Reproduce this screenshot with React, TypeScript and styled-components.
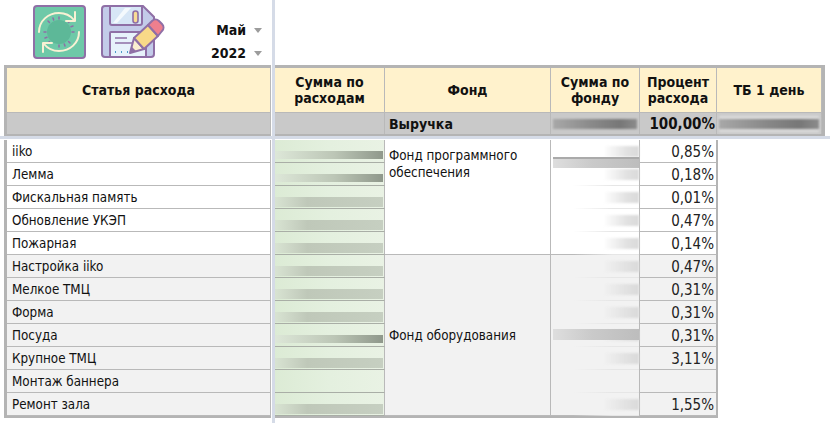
import styled, { createGlobalStyle } from "styled-components";

const GRID = "#b4b4b4";
const LINE = "#b9b9b9";
const SPLIT = "#d5dbe7";

const expenses = [
  { name: "iiko", percent: "0,85%", bar: "dark" },
  { name: "Лемма", percent: "0,18%", bar: "dark" },
  { name: "Фискальная память", percent: "0,01%", bar: "soft" },
  { name: "Обновление УКЭП", percent: "0,47%", bar: "soft" },
  { name: "Пожарная", percent: "0,14%", bar: "soft" },
  { name: "Настройка iiko", percent: "0,47%", bar: "soft" },
  { name: "Мелкое ТМЦ", percent: "0,31%", bar: "soft" },
  { name: "Форма", percent: "0,31%", bar: "soft" },
  { name: "Посуда", percent: "0,31%", bar: "dark" },
  { name: "Крупное ТМЦ", percent: "3,11%", bar: "soft" },
  { name: "Монтаж баннера", percent: "", bar: "none" },
  { name: "Ремонт зала", percent: "1,55%", bar: "soft" },
];

const groups = [
  { title: "Фонд программного обеспечения", from: 0, to: 5, wide: 0, shaded: false, middle: false },
  { title: "Фонд оборудования", from: 5, to: 12, wide: 3, shaded: true, middle: true },
];

const App = () => {
  return (
    <>
      <GlobalStyle />
      <Page>
        <LeftPane>
          <Toolbar>
            <IconButton>
              <RefreshIcon />
            </IconButton>
            <IconButton>
              <SaveIcon />
            </IconButton>
            <Filters>
              <Filter>
                Май <Caret />
              </Filter>
              <Filter>
                2022 <Caret />
              </Filter>
            </Filters>
          </Toolbar>
          <LeftHead>
            <HeadCell>Статья расхода</HeadCell>
            <LeftTotal />
          </LeftHead>
          <HSplit />
          <LeftBody>
            {expenses.map((item, i) => (
              <NameCell key={item.name} $shaded={i >= 5}>
                {item.name}
              </NameCell>
            ))}
          </LeftBody>
        </LeftPane>
        <VSplit />
        <RightPane>
          <EmptyBar />
          <RightHead>
            <HeadCell>
              Сумма по
              <br />
              расходам
            </HeadCell>
            <HeadCell>Фонд</HeadCell>
            <HeadCell>
              Сумма по
              <br />
              фонду
            </HeadCell>
            <HeadCell>
              Процент
              <br />
              расхода
            </HeadCell>
            <HeadCell>ТБ 1 день</HeadCell>
            <TotalCell />
            <TotalCell>Выручка</TotalCell>
            <TotalCell>
              <TotalBar />
            </TotalCell>
            <TotalPercent>100,00%</TotalPercent>
            <TotalCell>
              <TotalBar $halo />
            </TotalCell>
          </RightHead>
          <HSplit />
          <RightBody>
            {groups.map((group) => {
              const rows = expenses.slice(group.from, group.to);
              return (
                <FundGroup key={group.title} $rows={rows.length} $shaded={group.shaded}>
                  {rows.map((row) => (
                    <SumCell key={row.name}>
                      {row.bar !== "none" && <SumBar $dark={row.bar === "dark"} />}
                    </SumCell>
                  ))}
                  <FundName $middle={group.middle}>{group.title}</FundName>
                  <FundSum>
                    {rows.map((row, i) => (
                      <FundSlot key={row.name}>
                        {row.percent && <FundBar />}
                        {i === group.wide && <WideBar $low={!group.middle} />}
                      </FundSlot>
                    ))}
                  </FundSum>
                  {rows.map((row) => (
                    <PercentCell key={row.name}>{row.percent}</PercentCell>
                  ))}
                </FundGroup>
              );
            })}
          </RightBody>
        </RightPane>
      </Page>
    </>
  );
};

const RefreshIcon = () => (
  <svg width="53" height="54" viewBox="0 0 53 54">
    <rect x="1" y="1" width="51" height="52" rx="3" fill="#6ec9a8" stroke="#8f6fa6" strokeWidth="2" />
    <circle cx="26" cy="27" r="12" fill="#5db898" />
    <g stroke="#8f6fa6" strokeWidth="1.5" strokeLinecap="round">
      <path d="M26 12v2M26 40v2M11 27h2M39 27h2M15 16l1.5 1.5M35.5 36.5 37 38M37 16l-1.5 1.5M16.5 36.5 15 38M20 13l.7 2M32 41l-.7-2M12 33l2-.7M40 21l-2 .7" />
    </g>
    <g fill="none" stroke="#f9f1d4" strokeWidth="2" strokeLinecap="round" strokeLinejoin="round">
      <path d="M6 27C6 16 15 8 26 8c6 0 11 2 15 7" />
      <path d="M42 7v9h-9" />
      <path d="M46 27c0 11-9 19-20 19-6 0-11-2-15-7" />
      <path d="M10 47v-9h9" />
    </g>
  </svg>
);

const SaveIcon = () => (
  <svg width="66" height="54" viewBox="0 0 66 54">
    <path d="M4 1h38l11 11v37a3 3 0 0 1-3 3H4a3 3 0 0 1-3-3V4a3 3 0 0 1 3-3z" fill="#c3cbe9" stroke="#8f6fa6" strokeWidth="2" />
    <path d="M9 1h32v17a2 2 0 0 1-2 2H11a2 2 0 0 1-2-2z" fill="#d7e6f6" stroke="#8f6fa6" strokeWidth="2" />
    <path d="M12 18 24 3h6L16 18z" fill="#f4f9fd" />
    <rect x="32" y="6" width="5" height="12" rx="2.5" fill="#f8dc95" stroke="#8f6fa6" strokeWidth="1.6" />
    <rect x="9" y="27" width="36" height="25" rx="1" fill="#e7f2fb" stroke="#8f6fa6" strokeWidth="2" />
    <path d="M14 33h12M14 38h18" stroke="#8f6fa6" strokeWidth="1.6" />
    <path d="M14 47h1M20 47h1M26 47h1" stroke="#4b9ac9" strokeWidth="2" />
    <path d="M29 48 33 33 43 44z" fill="#fbeed0" stroke="#8f6fa6" strokeWidth="2" strokeLinejoin="round" />
    <path d="M29 48l2-6 4 4z" fill="#8f6fa6" />
    <path d="M33 33 47 20l10 11-14 13z" fill="#f8d988" stroke="#8f6fa6" strokeWidth="2" strokeLinejoin="round" />
    <path d="M47 20l4-4c2-2 5-2 7 0l3 3c2 2 2 5 0 7l-4 5z" fill="#ee7f8e" stroke="#8f6fa6" strokeWidth="2" strokeLinejoin="round" />
  </svg>
);

const GlobalStyle = createGlobalStyle`
  html, body {
    margin: 0;
    padding: 0;
    background: #fff;
    overflow: hidden;
  }
  * {
    box-sizing: border-box;
  }
`;

const Page = styled.div`
  display: flex;
  width: 830px;
  height: 423px;
  overflow: hidden;
  color: #111;
  font-family: "DejaVu Sans Condensed", "DejaVu Sans", sans-serif;
  font-size: 13.3px;
`;

const LeftPane = styled.div`
  display: flex;
  flex-direction: column;
  width: 272px;
  flex: none;
`;

const RightPane = styled.div`
  display: flex;
  flex-direction: column;
  flex: 1;
`;

const VSplit = styled.div`
  width: 3px;
  flex: none;
  background: ${SPLIT};
`;

const HSplit = styled.div`
  height: 4px;
  flex: none;
  background: ${SPLIT};
  border-bottom: 1px solid #fff;
`;

const Toolbar = styled.div`
  display: flex;
  align-items: flex-start;
  gap: 16px;
  height: 65px;
  padding: 5px 9px 0 33px;
`;

const EmptyBar = styled.div`
  height: 65px;
`;

const IconButton = styled.div`
  display: flex;
  line-height: 0;
  margin-right: -1px;
`;

const Filters = styled.div`
  display: flex;
  flex-direction: column;
  align-items: flex-end;
  gap: 7px;
  margin-left: auto;
  margin-top: 17px;
  margin-right: 1px;
`;

const Filter = styled.div`
  display: flex;
  align-items: center;
  gap: 8px;
  height: 16px;
  font-weight: 700;
  font-size: 14px;
`;

const Caret = styled.span`
  width: 0;
  height: 0;
  border-left: 4px solid transparent;
  border-right: 4px solid transparent;
  border-top: 5px solid #9c9c9c;
`;

const HeadCell = styled.div`
  display: flex;
  align-items: center;
  justify-content: center;
  height: 45px;
  background: #fff2cc;
  border-right: 1px solid ${LINE};
  border-bottom: 1px solid ${LINE};
  font-weight: 700;
  font-size: 14px;
  line-height: 16px;
  text-align: center;
`;

const LeftHead = styled.div`
  width: 267px;
  margin-left: 4px;
  border-left: 3px solid ${GRID};
  border-top: 3px solid ${GRID};
  border-bottom: 2px solid ${GRID};
  flex: none;
`;

const LeftTotal = styled.div`
  height: 21px;
  background: #c9c9c9;
  border-right: 1px solid ${LINE};
`;

const RightHead = styled.div`
  display: grid;
  grid-template-columns: 110px 166px 89px 77px 105px;
  grid-template-rows: 45px 21px;
  width: 550px;
  border-top: 3px solid ${GRID};
  border-right: 3px solid ${GRID};
  border-bottom: 2px solid ${GRID};
  flex: none;
`;

const TotalCell = styled.div`
  display: flex;
  align-items: center;
  padding-left: 4px;
  background: #c9c9c9;
  border-right: 1px solid ${LINE};
  font-weight: 700;
  font-size: 14px;
`;

const TotalPercent = styled(TotalCell)`
  justify-content: flex-end;
  padding: 0 1px 0 0;
  font-size: 15px;
`;

const TotalBar = styled.div<{ $halo?: boolean }>`
  width: 100%;
  height: 10px;
  margin-left: -2px;
  background: linear-gradient(90deg, #a8a8a8, #8a8a8a 45%, #777 80%, #8c8c8c);
  box-shadow: ${({ $halo }) => ($halo ? "0 -3px 2px #dcdcdc, 0 3px 2px #dcdcdc" : "none")};
  filter: blur(0.8px);
`;

const LeftBody = styled.div`
  width: 267px;
  margin-left: 4px;
  border-left: 3px solid ${GRID};
  border-bottom: 2px solid ${GRID};
`;

const NameCell = styled.div<{ $shaded: boolean }>`
  display: flex;
  align-items: center;
  height: 23px;
  padding: 1px 0 0 5px;
  background: ${({ $shaded }) => ($shaded ? "#f2f2f2" : "#fff")};
  border-right: 1px solid ${LINE};
  border-bottom: 1px solid ${LINE};
`;

const RightBody = styled.div`
  display: flex;
  flex-direction: column;
  width: 443px;
  border-bottom: 2px solid ${GRID};
`;

const FundGroup = styled.div<{ $rows: number; $shaded: boolean }>`
  display: grid;
  grid-template-columns: 110px 166px 89px 78px;
  grid-template-rows: repeat(${({ $rows }) => $rows}, 23px);
  grid-auto-flow: column;
  background: ${({ $shaded }) => ($shaded ? "#f2f2f2" : "#fff")};
`;

const SumCell = styled.div`
  display: flex;
  flex-direction: column;
  justify-content: flex-end;
  padding: 0 1px 1px 0;
  background: linear-gradient(90deg, #dcebd5, #e4f0df 50%, #e9f2e4);
  border-right: 1px solid ${LINE};
  border-bottom: 1px solid #a9aea6;
`;

const SumBar = styled.div<{ $dark: boolean }>`
  height: ${({ $dark }) => ($dark ? "8px" : "10px")};
  margin-bottom: ${({ $dark }) => ($dark ? "2px" : "0")};
  background: ${({ $dark }) =>
    $dark
      ? "linear-gradient(90deg, #dde7d8, #bcc6b6 55%, #8f988b)"
      : "linear-gradient(90deg, #d8e3d2, #bfc8b9 30%, #c6cfc1)"};
  filter: blur(0.6px);
`;

const FundName = styled.div<{ $middle: boolean }>`
  grid-row: 1 / -1;
  display: flex;
  align-items: ${({ $middle }) => ($middle ? "center" : "flex-start")};
  padding: ${({ $middle }) => ($middle ? "0 4px" : "7px 4px 0")};
  line-height: 17px;
  border-right: 1px solid ${LINE};
  border-bottom: 1px solid ${LINE};
`;

const FundSum = styled.div`
  grid-row: 1 / -1;
  display: flex;
  flex-direction: column;
  border-right: 1px solid ${LINE};
  border-bottom: 1px solid ${LINE};
`;

const FundSlot = styled.div`
  position: relative;
  height: 23px;
  flex: none;
  padding-top: 6px;
  background: linear-gradient(90deg, transparent 25%, #e6e6e6 70%, #e6e6e6) bottom / 100% 1px no-repeat;
`;

const FundBar = styled.div`
  width: 36px;
  height: 11px;
  margin-left: auto;
  background: linear-gradient(90deg, transparent, #e0e0e0 70%, #dadada);
  filter: blur(0.8px);
`;

const WideBar = styled.div<{ $low: boolean }>`
  position: absolute;
  left: 2px;
  right: 0;
  top: ${({ $low }) => ($low ? "17px" : "5px")};
  height: 11px;
  background: linear-gradient(90deg, #dedede, #cacaca 45%, #bdbdbd);
  box-shadow: ${({ $low }) => ($low ? "inset 0 2px 0 #aaa" : "none")};
  filter: blur(0.5px);
`;

const PercentCell = styled.div`
  display: flex;
  align-items: flex-end;
  justify-content: flex-end;
  padding: 0 2px 1px 0;
  color: #222;
  font-size: 15px;
  line-height: 17px;
  border-right: 2px solid ${GRID};
  border-bottom: 1px solid ${LINE};
`;

export default App;
